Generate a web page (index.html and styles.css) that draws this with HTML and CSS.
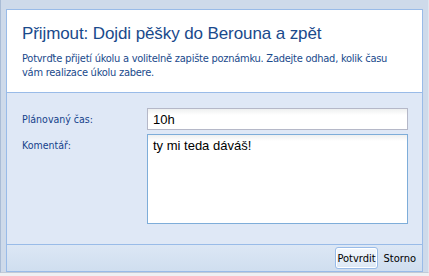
FILE: index.html
```html
<!DOCTYPE html>
<html lang="cs">
<head>
    <meta charset="UTF-8">
    <title>Přijmout úkol</title>
    <link rel="stylesheet" href="styles.css">
</head>
<body>

    <!-- Dialog window -->
    <div class="win">
        <div class="panel">

            <!-- Header -->
            <div class="panel-header">
                <h1 class="title">Přijmout: Dojdi pěšky do Berouna a zpět</h1>
                <p class="hint">Potvrďte přijetí úkolu a volitelně zapište poznámku. Zadejte odhad, kolik času vám realizace úkolu zabere.</p>
            </div>

            <!-- Form -->
            <form class="panel-body">
                <div class="form-row">
                    <label class="form-label" for="planned">Plánovaný čas:</label>
                    <input class="form-input" type="text" id="planned" value="10h">
                </div>
                <div class="form-row">
                    <label class="form-label" for="comment">Komentář:</label>
                    <textarea class="form-area" id="comment">ty mi teda dáváš!</textarea>
                </div>
            </form>

            <!-- Buttons -->
            <div class="panel-footer">
                <button class="btn btn-active" type="button">Potvrdit</button>
                <button class="btn" type="button">Storno</button>
            </div>

        </div>
    </div>

</body>
</html>
```

FILE: styles.css
```css
/* Reset */
* {
    margin: 0;
    padding: 0;
    box-sizing: border-box;
}

body {
    background: #eef0f3;
    font-family: Tahoma, "DejaVu Sans", sans-serif;
}

/* Window frame */
.win {
    width: 429px;
    height: 273px;
    background: #cedaea;
    border-left: 1px solid #a9bcd6;
    border-right: 1px solid #dfe6ef;
    border-bottom: 1px solid #c2cad6;
    padding: 9px 5px 1px 5px;
}

.panel {
    border: 1px solid #99bbe8;
    background: #dfe8f6;
}

/* Header */
.panel-header {
    background: #fff;
    height: 83px;
    border-bottom: 1px solid #99bbe8;
    padding: 13px 15px 0 15px;
    color: #1a4a8c;
}

.title {
    font-family: "Liberation Sans", Arial, sans-serif;
    font-weight: normal;
    font-size: 17px;
    line-height: 22px;
    letter-spacing: -0.1px;
}

.hint {
    max-width: 380px;
    margin-top: 7px;
    font-family: "DejaVu Sans Condensed", "DejaVu Sans", sans-serif;
    font-size: 11px;
    line-height: 14px;
    letter-spacing: -0.25px;
}

/* Form */
.panel-body {
    height: 151px;
    padding: 15px 14px 0 15px;
    display: flex;
    flex-direction: column;
    gap: 4px;
}

.form-row {
    display: flex;
    align-items: flex-start;
}

.form-label {
    width: 125px;
    flex-shrink: 0;
    color: #15428b;
    font-family: "DejaVu Sans Condensed", "DejaVu Sans", sans-serif;
    font-size: 10.5px;
    line-height: 14px;
    padding-top: 4px;
}

.form-input,
.form-area {
    flex: 1;
    font-family: "Liberation Sans", Arial, sans-serif;
    font-size: 13px;
    color: #000;
    background: #fff linear-gradient(#eef0f0, #fff 6px);
    outline: none;
}

.form-input {
    height: 22px;
    border: 1px solid #b5b8c8;
    padding: 0 5px;
}

.form-area {
    height: 90px;
    border: 1px solid #7eadd9;
    padding: 3px 5px;
    resize: none;
    line-height: 15px;
}

/* Footer */
.panel-footer {
    height: 27px;
    border-top: 1px solid #99bbe8;
    background: linear-gradient(#dce7f5, #cfdeef);
    display: flex;
    justify-content: flex-end;
    align-items: center;
    gap: 4px;
    padding-right: 4px;
}

.btn {
    height: 22px;
    padding: 0 1px;
    border: 1px solid transparent;
    border-radius: 3px;
    background: none;
    font-family: "DejaVu Sans Condensed", "DejaVu Sans", sans-serif;
    font-size: 11px;
    color: #000;
}

.btn-active {
    border-color: #99bbe8;
    background: linear-gradient(#f4f8fd, #dbe7f5);
    box-shadow: inset 0 0 0 1px #fff;
}
```
